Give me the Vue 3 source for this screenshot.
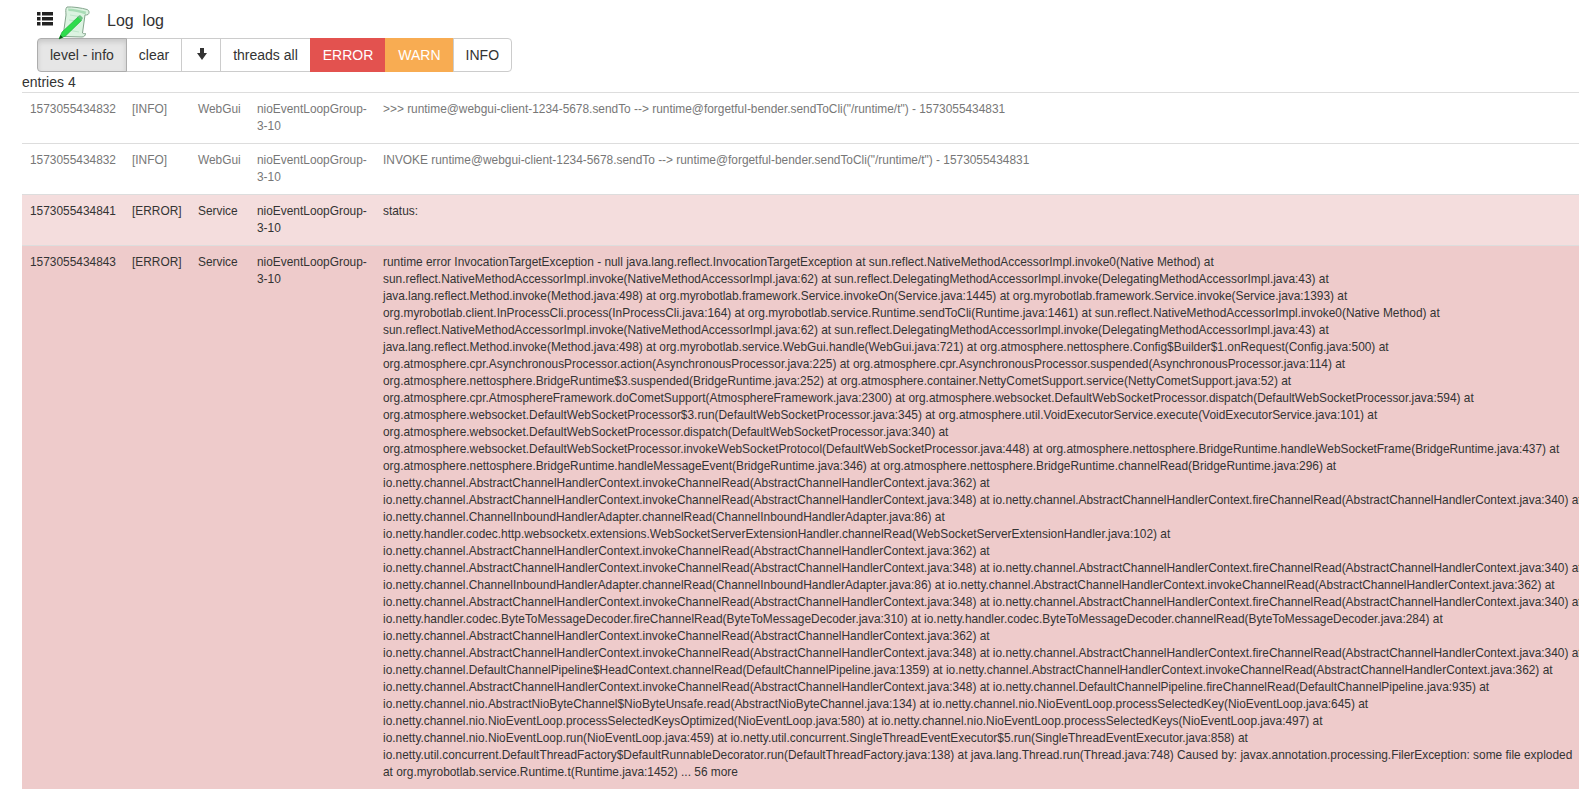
<script setup>
const buttons = [
  { label: 'level - info', cls: 'active' },
  { label: 'clear', cls: '' },
  { icon: true, cls: '' },
  { label: 'threads all', cls: '' },
  { label: 'ERROR', cls: 'danger' },
  { label: 'WARN', cls: 'warning' },
  { label: 'INFO', cls: '' },
]

const stack = 'runtime error InvocationTargetException - null java.lang.reflect.InvocationTargetException at sun.reflect.NativeMethodAccessorImpl.invoke0(Native Method) at sun.reflect.NativeMethodAccessorImpl.invoke(NativeMethodAccessorImpl.java:62) at sun.reflect.DelegatingMethodAccessorImpl.invoke(DelegatingMethodAccessorImpl.java:43) at java.lang.reflect.Method.invoke(Method.java:498) at org.myrobotlab.framework.Service.invokeOn(Service.java:1445) at org.myrobotlab.framework.Service.invoke(Service.java:1393) at org.myrobotlab.client.InProcessCli.process(InProcessCli.java:164) at org.myrobotlab.service.Runtime.sendToCli(Runtime.java:1461) at sun.reflect.NativeMethodAccessorImpl.invoke0(Native Method) at sun.reflect.NativeMethodAccessorImpl.invoke(NativeMethodAccessorImpl.java:62) at sun.reflect.DelegatingMethodAccessorImpl.invoke(DelegatingMethodAccessorImpl.java:43) at java.lang.reflect.Method.invoke(Method.java:498) at org.myrobotlab.service.WebGui.handle(WebGui.java:721) at org.atmosphere.nettosphere.Config$Builder$1.onRequest(Config.java:500) at org.atmosphere.cpr.AsynchronousProcessor.action(AsynchronousProcessor.java:225) at org.atmosphere.cpr.AsynchronousProcessor.suspended(AsynchronousProcessor.java:114) at org.atmosphere.nettosphere.BridgeRuntime$3.suspended(BridgeRuntime.java:252) at org.atmosphere.container.NettyCometSupport.service(NettyCometSupport.java:52) at org.atmosphere.cpr.AtmosphereFramework.doCometSupport(AtmosphereFramework.java:2300) at org.atmosphere.websocket.DefaultWebSocketProcessor.dispatch(DefaultWebSocketProcessor.java:594) at org.atmosphere.websocket.DefaultWebSocketProcessor$3.run(DefaultWebSocketProcessor.java:345) at org.atmosphere.util.VoidExecutorService.execute(VoidExecutorService.java:101) at org.atmosphere.websocket.DefaultWebSocketProcessor.dispatch(DefaultWebSocketProcessor.java:340) at org.atmosphere.websocket.DefaultWebSocketProcessor.invokeWebSocketProtocol(DefaultWebSocketProcessor.java:448) at org.atmosphere.nettosphere.BridgeRuntime.handleWebSocketFrame(BridgeRuntime.java:437) at org.atmosphere.nettosphere.BridgeRuntime.handleMessageEvent(BridgeRuntime.java:346) at org.atmosphere.nettosphere.BridgeRuntime.channelRead(BridgeRuntime.java:296) at io.netty.channel.AbstractChannelHandlerContext.invokeChannelRead(AbstractChannelHandlerContext.java:362) at io.netty.channel.AbstractChannelHandlerContext.invokeChannelRead(AbstractChannelHandlerContext.java:348) at io.netty.channel.AbstractChannelHandlerContext.fireChannelRead(AbstractChannelHandlerContext.java:340) at io.netty.channel.ChannelInboundHandlerAdapter.channelRead(ChannelInboundHandlerAdapter.java:86) at io.netty.handler.codec.http.websocketx.extensions.WebSocketServerExtensionHandler.channelRead(WebSocketServerExtensionHandler.java:102) at io.netty.channel.AbstractChannelHandlerContext.invokeChannelRead(AbstractChannelHandlerContext.java:362) at io.netty.channel.AbstractChannelHandlerContext.invokeChannelRead(AbstractChannelHandlerContext.java:348) at io.netty.channel.AbstractChannelHandlerContext.fireChannelRead(AbstractChannelHandlerContext.java:340) at io.netty.channel.ChannelInboundHandlerAdapter.channelRead(ChannelInboundHandlerAdapter.java:86) at io.netty.channel.AbstractChannelHandlerContext.invokeChannelRead(AbstractChannelHandlerContext.java:362) at io.netty.channel.AbstractChannelHandlerContext.invokeChannelRead(AbstractChannelHandlerContext.java:348) at io.netty.channel.AbstractChannelHandlerContext.fireChannelRead(AbstractChannelHandlerContext.java:340) at io.netty.handler.codec.ByteToMessageDecoder.fireChannelRead(ByteToMessageDecoder.java:310) at io.netty.handler.codec.ByteToMessageDecoder.channelRead(ByteToMessageDecoder.java:284) at io.netty.channel.AbstractChannelHandlerContext.invokeChannelRead(AbstractChannelHandlerContext.java:362) at io.netty.channel.AbstractChannelHandlerContext.invokeChannelRead(AbstractChannelHandlerContext.java:348) at io.netty.channel.AbstractChannelHandlerContext.fireChannelRead(AbstractChannelHandlerContext.java:340) at io.netty.channel.DefaultChannelPipeline$HeadContext.channelRead(DefaultChannelPipeline.java:1359) at io.netty.channel.AbstractChannelHandlerContext.invokeChannelRead(AbstractChannelHandlerContext.java:362) at io.netty.channel.AbstractChannelHandlerContext.invokeChannelRead(AbstractChannelHandlerContext.java:348) at io.netty.channel.DefaultChannelPipeline.fireChannelRead(DefaultChannelPipeline.java:935) at io.netty.channel.nio.AbstractNioByteChannel$NioByteUnsafe.read(AbstractNioByteChannel.java:134) at io.netty.channel.nio.NioEventLoop.processSelectedKey(NioEventLoop.java:645) at io.netty.channel.nio.NioEventLoop.processSelectedKeysOptimized(NioEventLoop.java:580) at io.netty.channel.nio.NioEventLoop.processSelectedKeys(NioEventLoop.java:497) at io.netty.channel.nio.NioEventLoop.run(NioEventLoop.java:459) at io.netty.util.concurrent.SingleThreadEventExecutor$5.run(SingleThreadEventExecutor.java:858) at io.netty.util.concurrent.DefaultThreadFactory$DefaultRunnableDecorator.run(DefaultThreadFactory.java:138) at java.lang.Thread.run(Thread.java:748) Caused by: javax.annotation.processing.FilerException: some file exploded at org.myrobotlab.service.Runtime.t(Runtime.java:1452) ... 56 more'

const rows = [
  { ts: '1573055434832', level: '[INFO]', src: 'WebGui', cls: 'info', msg: '>>> runtime@webgui-client-1234-5678.sendTo --> runtime@forgetful-bender.sendToCli("/runtime/t") - 1573055434831' },
  { ts: '1573055434832', level: '[INFO]', src: 'WebGui', cls: 'info', msg: 'INVOKE runtime@webgui-client-1234-5678.sendTo --> runtime@forgetful-bender.sendToCli("/runtime/t") - 1573055434831' },
  { ts: '1573055434841', level: '[ERROR]', src: 'Service', cls: 'err-light', msg: 'status:' },
  { ts: '1573055434843', level: '[ERROR]', src: 'Service', cls: 'err-dark', msg: stack },
]
</script>

<template>
  <div class="page">
    <header class="head">
      <svg class="list-icon" viewBox="0 0 16 14" width="16" height="14" aria-hidden="true">
        <path d="M0 0h3.500v3.500H0zM5 0h11v3.500H5zM0 5h3.500v3.500H0zM5 5h11v3.500H5zM0 10h3.500v3.500H0zM5 10h11v3.500H5z" fill="#222" />
      </svg>
      <svg class="logo" viewBox="0 0 32 34" width="32" height="34" aria-hidden="true">
        <path d="M9 1C14 .5 24 2 29 3.500c2.500.8 2.500 4 1 5-1 .6-2 .5-3 .4L24.500 27c1 1 3 .5 3 .5 0 2-1.500 3.500-3.500 3.500L5 30.500 8 9C8 6 7 3 9 1z" fill="#dcf3e1" stroke="#84a58d" stroke-width="1" />
        <path d="M10 2.500c5 0 12 1.500 18 3l-.5 3c-6-2-12-3.500-17-3.500z" fill="#a9dcb6" />
        <path d="M12 9l12 2M11 14l8 1M10 24l11 2" stroke="#bfe6ca" stroke-width="1" fill="none" />
        <path d="M1 33l3-7L20 11l3.500 3.500L7.500 30z" fill="#2fdc4d" stroke="#1aa834" stroke-width=".6" />
        <path d="M19.500 10.500l2.500-1.500 3 3-1.500 2.500z" fill="#6cc283" />
        <path d="M1 33l1.500-4 2.500 2.500z" fill="#0b5c1a" />
      </svg>
      <span class="title">Log&nbsp;&nbsp;log</span>
    </header>

    <div class="btn-group">
      <button v-for="(b, i) in buttons" :key="i" class="btn" :class="b.cls">
        <svg v-if="b.icon" viewBox="0 1 14 14" width="14" height="14" aria-hidden="true">
          <path d="M6 0h4v6h3L8 13 3 6h3z" fill="#333" />
        </svg>
        <template v-else>{{ b.label }}</template>
      </button>
    </div>

    <div class="entries">entries 4</div>

    <table class="log">
      <colgroup>
        <col class="c-ts" />
        <col class="c-level" />
        <col class="c-src" />
        <col class="c-thread" />
        <col class="c-msg" />
      </colgroup>
      <tbody>
        <tr v-for="(r, i) in rows" :key="i" :class="r.cls">
          <td>{{ r.ts }}</td>
          <td>{{ r.level }}</td>
          <td>{{ r.src }}</td>
          <td>nioEventLoopGroup-3-10</td>
          <td>{{ r.msg }}</td>
        </tr>
      </tbody>
    </table>
  </div>
</template>

<style>
html, body { margin: 0; background: #fff; }
</style>

<style scoped>
.page {
  padding-left: 22px;
  overflow: hidden;
  font-family: "Liberation Sans", Arial, sans-serif;
  font-size: 14px;
  line-height: 20px;
  color: #333;
}
.head {
  display: flex;
  align-items: center;
  height: 38px;
  padding: 3px 0 0 15px;
  box-sizing: border-box;
}
.list-icon { margin-right: 5px; margin-top: -3px; flex: none; }
.logo { margin-top: 4px; margin-right: 17px; flex: none; position: relative; z-index: 1; }
.title { font-size: 16px; color: #333; }
.btn-group { display: flex; margin-left: 15px; }
.btn {
  font: inherit;
  color: #333;
  background: #fff;
  border: 1px solid #ccc;
  padding: 6px 12px;
  margin: 0 0 0 -1px;
  height: 34px;
  display: flex;
  align-items: center;
  cursor: pointer;
}
.btn:first-child { margin-left: 0; border-radius: 4px 0 0 4px; }
.btn:last-child { border-radius: 0 4px 4px 0; }
.btn.active {
  background: #e6e6e6;
  border-color: #adadad;
  box-shadow: inset 0 3px 5px rgba(0, 0, 0, .125);
  position: relative;
}
.btn.danger { background: #e3524f; border-color: #e3524f; color: #fff; }
.btn.warning { background: #f8ac52; border-color: #f8ac52; color: #fff; }
.entries { height: 20px; }
.log {
  table-layout: fixed;
  width: 1570px;
  border-collapse: collapse;
  font-size: 11.9px;
  line-height: 17px;
}
.c-ts { width: 102px; }
.c-level { width: 66px; }
.c-src { width: 59px; }
.c-thread { width: 126px; }
.log td {
  padding: 8px;
  vertical-align: top;
  border-top: 1px solid #ddd;
}
.info td { color: #777; }
.err-light td { background: #f4dddd; color: #333; }
.err-dark td { background: #eecbcb; color: #333; }
</style>
